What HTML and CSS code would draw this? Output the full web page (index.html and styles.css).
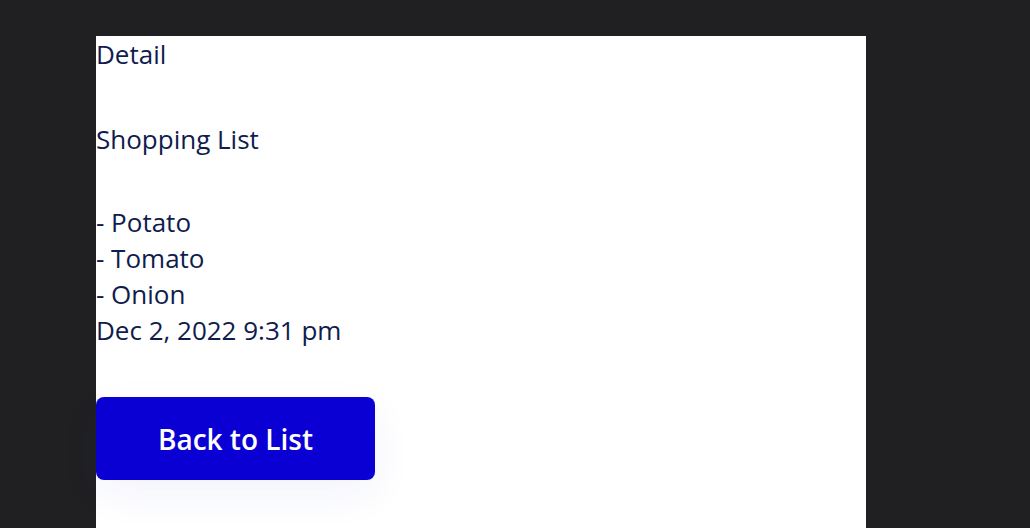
FILE: index.html
```html
<!DOCTYPE html>
<html>
<head>
<meta charset="utf-8">
<link rel="stylesheet" href="styles.css">
</head>
<body>
<main class="panel">
  <div class="title">Detail</div>
  <div class="note-title">Shopping List</div>
  <div class="note-body">
    <div>- Potato</div>
    <div>- Tomato</div>
    <div>- Onion</div>
    <div>Dec 2, 2022 9:31 pm</div>
  </div>
  <button class="back">Back to List</button>
</main>
</body>
</html>
```
FILE: styles.css
```css
html, body {
  margin: 0;
  padding: 0;
  background: #202022;
  height: 100%;
  overflow: hidden;
}
.panel {
  margin: 36px 0 0 96px;
  width: 770px;
  min-height: 492px;
  background: #ffffff;
  font-family: "Open Sans", sans-serif;
  font-size: 26px;
  line-height: 36px;
  color: #0f1c4d;
  display: flex;
  flex-direction: column;
  align-items: flex-start;
}
.title {
  margin-bottom: 49px;
}
.note-title {
  margin-bottom: 47px;
}
.note-body {
  margin-bottom: 49px;
}
.back {
  width: 279px;
  height: 83px;
  border: none;
  border-radius: 8px;
  background: #0b00d4;
  color: #ffffff;
  font-family: "Open Sans", sans-serif;
  font-size: 28px;
  font-weight: 600;
  box-shadow: 0 14px 40px rgba(40, 50, 200, 0.06);
  cursor: pointer;
}
```
